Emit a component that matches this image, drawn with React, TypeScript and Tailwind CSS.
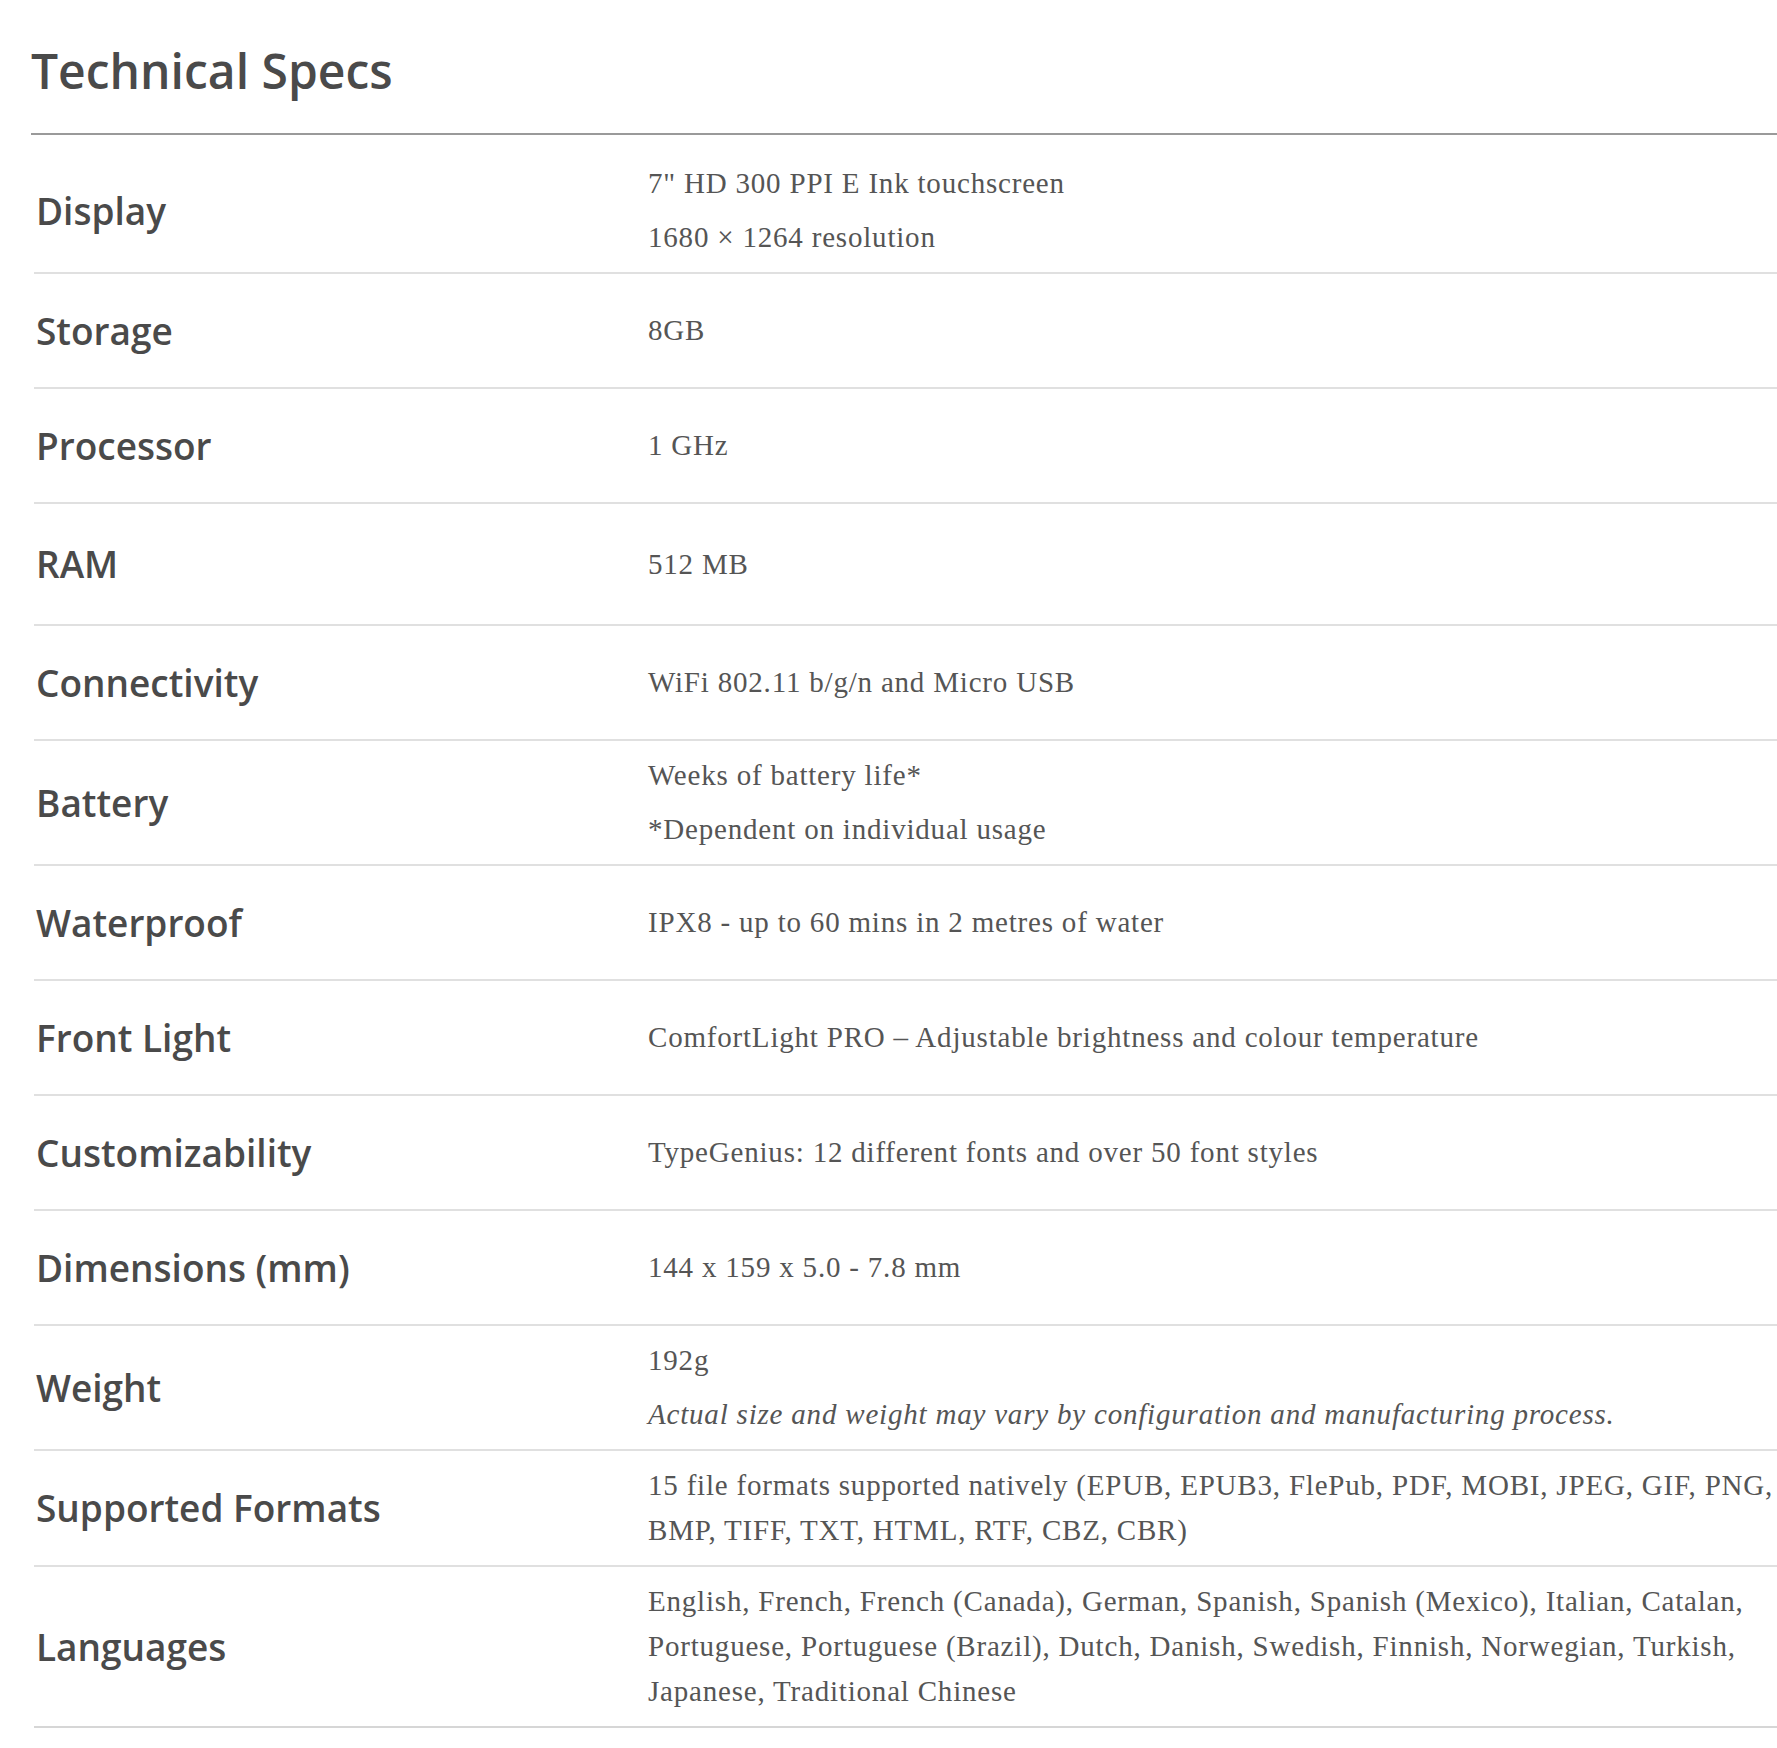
import React from "react";

type Spec = { label: string; values: React.ReactNode[]; extra?: string };

const specs: Spec[] = [
  { label: "Display", values: ['7" HD 300 PPI E Ink touchscreen', "1680 × 1264 resolution"], extra: "pt-[26px]" },
  { label: "Storage", values: ["8GB"] },
  { label: "Processor", values: ["1 GHz"] },
  { label: "RAM", values: ["512 MB"], extra: "min-h-[122px]" },
  { label: "Connectivity", values: ["WiFi 802.11 b/g/n and Micro USB"] },
  { label: "Battery", values: ["Weeks of battery life*", "*Dependent on individual usage"] },
  { label: "Waterproof", values: ["IPX8 - up to 60 mins in 2 metres of water"] },
  { label: "Front Light", values: ["ComfortLight PRO – Adjustable brightness and colour temperature"] },
  { label: "Customizability", values: ["TypeGenius: 12 different fonts and over 50 font styles"] },
  { label: "Dimensions (mm)", values: ["144 x 159 x 5.0 - 7.8 mm"] },
  {
    label: "Weight",
    values: ["192g", <em key="i">Actual size and weight may vary by configuration and manufacturing process.</em>],
  },
  {
    label: "Supported Formats",
    values: ["15 file formats supported natively (EPUB, EPUB3, FlePub, PDF, MOBI, JPEG, GIF, PNG, BMP, TIFF, TXT, HTML, RTF, CBZ, CBR)"],
  },
  {
    label: "Languages",
    values: [
      "English, French, French (Canada), German, Spanish, Spanish (Mexico), Italian, Catalan, Portuguese, Portuguese (Brazil), Dutch, Danish, Swedish, Finnish, Norwegian, Turkish, Japanese, Traditional Chinese",
    ],
  },
];

const SpecRow = ({ spec, last }: { spec: Spec; last: boolean }) => {
  return (
    <div
      className={`flex items-center min-h-[115px] py-3 ${spec.extra ?? ""} ${
        last ? "border-b-2 border-[#d6d6d6]" : "border-b-2 border-[#e0e0e0]"
      }`}
    >
      <div className="w-[614px] shrink-0 pl-[2px] font-['Open_Sans',sans-serif] font-semibold text-[37px] leading-[50px] text-[#4a4a4a]">
        {spec.label}
      </div>
      <div className="flex-1 flex flex-col gap-[9px] font-['Liberation_Serif',serif] text-[29px] tracking-[0.8px] leading-[45px] text-[#555555]">
        {spec.values.map((v, i) => (
          <p key={i}>{v}</p>
        ))}
      </div>
    </div>
  );
};

export default function App() {
  return (
    <div className="bg-white min-h-[1748px] pl-[31px] pt-[41px]">
      <h2 className="font-['Open_Sans',sans-serif] font-semibold text-[48px] leading-[60px] text-[#4a4a4a] pb-[32px] border-b-2 border-[#9a9a9a]">
        Technical Specs
      </h2>
      <div className="pl-[3px]">
        {specs.map((s, i) => (
          <SpecRow key={s.label} spec={s} last={i === specs.length - 1} />
        ))}
      </div>
    </div>
  );
}
